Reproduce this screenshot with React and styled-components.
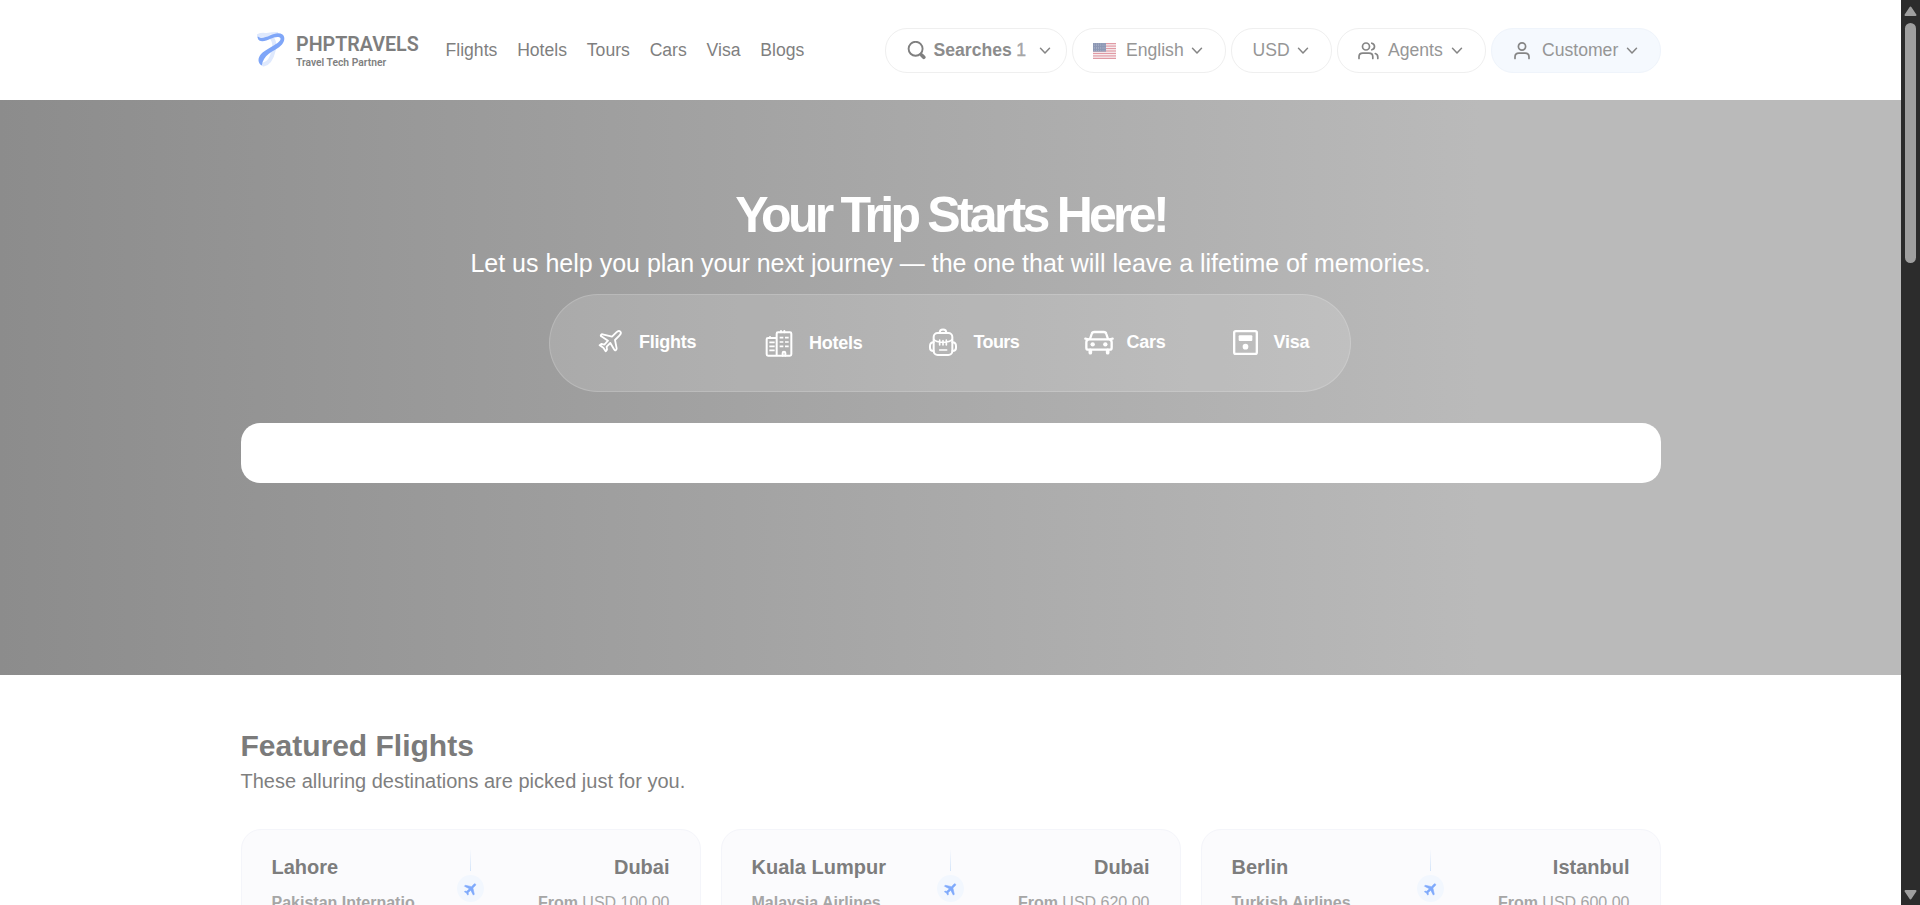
import React from "react";
import styled, { createGlobalStyle } from "styled-components";

const GlobalStyle = createGlobalStyle`
  *, *::before, *::after { box-sizing: border-box; }
  html, body, #root { height: 100%; }
  body {
    margin: 0;
    overflow: hidden;
    background: #fff;
    color: #7f7f7f;
    font-family: "Liberation Sans", Arial, sans-serif;
  }
  svg { display: block; flex: none; }
`;

const Window = styled.div`
  display: flex;
  height: 905px;
  overflow: hidden;
`;

const Page = styled.div`
  flex: 1;
  min-width: 0;
  height: 100%;
  overflow: hidden;
`;

const Container = styled.div`
  width: 1420px;
  margin: 0 auto;
`;

const Header = styled.header`
  height: 100px;
  background: #fff;
`;

const HeaderRow = styled(Container)`
  display: flex;
  align-items: center;
  height: 100px;
  padding-left: 16.5px;
`;

const Brand = styled.a`
  display: flex;
  align-items: flex-start;
  gap: 10px;
  width: 188.5px;
  height: 36px;
  margin-top: -1px;
`;

const BrandText = styled.div`
  display: flex;
  flex-direction: column;
  padding-top: 4px;
  font-family: Roboto, sans-serif;
  white-space: nowrap;
`;

const BrandName = styled.span`
  font-size: 19.7px;
  font-weight: 600;
  line-height: 18px;
  color: #7e7e7e;
`;

const BrandTagline = styled.span`
  margin-top: 3px;
  font-size: 10.3px;
  font-weight: 600;
  line-height: 11px;
  color: #808080;
`;

const Nav = styled.nav`
  display: flex;
  gap: 19.8px;
  flex: 1;
`;

const NavLink = styled.a`
  font-size: 17.6px;
  line-height: 24px;
  color: #7f7f7f;
`;

const Actions = styled.div`
  display: flex;
  gap: 5px;
  padding-top: 1px;
`;

const Pill = styled.button`
  display: flex;
  align-items: center;
  width: ${(p) => p.$width}px;
  height: 45px;
  padding: 0 0 0 ${(p) => p.$start}px;
  border: 1px solid ${(p) => (p.$tinted ? "#eff4fb" : "#efefef")};
  border-radius: 22px;
  background: ${(p) => (p.$tinted ? "#f5f9fe" : "#fff")};
  font-family: inherit;
  font-size: 17.6px;
  line-height: 24px;
  color: #969696;
  white-space: nowrap;
`;

const PillLabel = styled.span`
  margin: 0 ${(p) => p.$after ?? 8}px 2px ${(p) => p.$before ?? 0}px;
  font-weight: ${(p) => (p.$bold ? 700 : 400)};
  color: ${(p) => (p.$bold ? "#8c8c8c" : "inherit")};
`;

const Count = styled.span`
  margin: 0 12.5px 2px 4.5px;
  color: #a6a6a6;
  -webkit-text-stroke: 0.4px #a6a6a6;
`;

const Hero = styled.section`
  height: 575px;
  padding-top: 87px;
  background: linear-gradient(90deg, #8c8c8c 0, #bababa 1480px);
`;

const HeroInner = styled(Container)`
  display: flex;
  flex-direction: column;
  align-items: center;
  color: #fff;
`;

const HeroTitle = styled.h1`
  margin: 0;
  font-size: 50px;
  line-height: 56px;
  font-weight: 700;
  letter-spacing: -3.75px;
`;

const HeroText = styled.p`
  margin: 5px 0 0;
  font-size: 25px;
  line-height: 30px;
`;

const Tabs = styled.div`
  display: flex;
  align-items: center;
  width: 802px;
  height: 98px;
  margin: 16px 1px 0 0;
  padding: 0 0 2px 47px;
  border: 1px solid rgba(255, 255, 255, 0.16);
  border-radius: 49px;
  background: rgba(255, 255, 255, 0.14);
`;

const Tab = styled.a`
  display: flex;
  align-items: center;
  gap: ${(p) => p.$gap}px;
  width: ${(p) => p.$width}px;
  padding-top: ${(p) => p.$drop ?? 0}px;
  font-size: 18px;
  line-height: 24px;
  font-weight: 700;
  letter-spacing: ${(p) => p.$tracking ?? -0.25}px;
`;

const TabLabel = styled.span`
  margin-bottom: 1px;
`;

const SearchPanel = styled.div`
  width: 1420px;
  height: 60px;
  margin-top: 31px;
  border-radius: 19px;
  background: #fff;
`;

const Section = styled(Container).attrs({ as: "section" })`
  padding-top: 53px;
`;

const SectionTitle = styled.h2`
  margin: 0;
  font-size: 30px;
  line-height: 36px;
  font-weight: 700;
  color: #7b7b7b;
`;

const SectionText = styled.p`
  margin: 5px 0 0;
  font-size: 20px;
  line-height: 24px;
  color: #7f7f7f;
`;

const Cards = styled.div`
  display: grid;
  grid-template-columns: repeat(3, 460px);
  gap: 20px;
  margin-top: 36px;
`;

const Card = styled.article`
  display: grid;
  grid-template-columns: 1fr 28px 1fr;
  height: 120px;
  padding: 19px 30px 0;
  border: 1px solid #f4f5fa;
  border-radius: 20px;
  background: #fbfbfd;
`;

const Place = styled.div`
  padding-top: 6px;
  text-align: ${(p) => (p.$end ? "right" : "left")};
  white-space: nowrap;
`;

const City = styled.h3`
  margin: 0;
  font-size: 20px;
  line-height: 25px;
  color: #7d7d7d;
`;

const Detail = styled.p`
  margin: 12px 0 0;
  font-size: 16px;
  line-height: 22px;
  font-weight: ${(p) => (p.$strong ? 700 : 400)};
  color: #a6a6a6;
`;

const Route = styled.div`
  display: flex;
  flex-direction: column;
  align-items: center;
  gap: 4px;
`;

const RouteLine = styled.span`
  width: 1px;
  height: 22px;
  background: linear-gradient(#fbfbfd, #d3e4f9);
`;

const RouteBadge = styled.span`
  display: grid;
  place-items: center;
  width: 27px;
  height: 27px;
  border-radius: 50%;
  background: #f2f7fe;
`;

const Scrollbar = styled.aside`
  display: flex;
  flex-direction: column;
  align-items: center;
  width: 19px;
  height: 100%;
  padding: 6px 0 5px;
  background: #2c2c2c;
`;

const ScrollThumb = styled.div`
  width: 11px;
  height: 240px;
  margin: 7px 0 auto;
  border-radius: 6px;
  background: #9f9f9f;
`;

const Logo = () => (
  <svg width="29" height="36" viewBox="0 0 29 36" fill="none">
    <path d="M1 4C5 2 10 3 13 4.500 17.500 7.500 18 13 16.500 19 15 25.500 12 31.500 6.500 32.500" stroke="#dfe9fd" strokeWidth="4" strokeLinecap="round" />
    <path d="M2 4.500C8 1 14 1 21 1" stroke="#dfe9fd" strokeWidth="2" />
    <path d="M.8 4.500C4 7 8.500 5.500 13 3.500 17 1.700 22 .300 25.500 2.500 28.500 5 27.500 9.500 25 12.500 21.500 16.500 16 18.500 11.500 22 8 25 5.500 28.500 4.800 33.500 1.300 31.500.500 27.500 2.800 23.700 6 19 12 16.500 17.500 13 21.500 10.500 24.500 8 23.300 6 22 4 17 5 13.500 6.800 9.500 8.800 5 10.300 2.300 8.500 1 7.600.500 6 .8 4.500Z" fill="#7fa6f8" />
  </svg>
);

const Chevron = () => (
  <svg width="12" height="8" viewBox="0 0 12 8" fill="none" stroke="#858585" strokeWidth="1.500" strokeLinecap="round" strokeLinejoin="round">
    <path d="M1.500 1.200 6 5.900l4.500-4.700" />
  </svg>
);

const SearchIcon = () => (
  <svg width="19" height="19" viewBox="0 0 19 19" fill="none" stroke="#7f7f7f" strokeLinecap="round">
    <circle cx="8.600" cy="7.800" r="7" strokeWidth="1.900" />
    <path d="m13.600 13 .9.900" strokeWidth="2.200" />
    <path d="m14.800 14.200 2 2.100" strokeWidth="3.600" />
  </svg>
);

const stripes = [0, 2, 4, 6, 8, 10, 12];
const starRows = [1, 2.6, 4.2, 5.8, 7.4];
const starCols = [1.2, 3.4, 5.6, 7.8, 10, 12];

const Flag = () => (
  <svg width="23" height="16" viewBox="0 0 23 16">
    <rect width="23" height="16" fill="#f8f3f5" />
    {stripes.map((n) => (
      <rect key={n} y={n * 1.231} width="23" height="1.231" fill="#e19aa4" />
    ))}
    <rect width="13" height="8.620" fill="#8c97b4" />
    {starRows.map((y) =>
      starCols.map((x) => <circle key={`${x}-${y}`} cx={x} cy={y} r="0.450" fill="#c3c9d8" />)
    )}
  </svg>
);

const AgentsIcon = () => (
  <svg width="21" height="18" viewBox="0 0 21 18" fill="none" stroke="#858585" strokeWidth="1.700" strokeLinecap="round">
    <circle cx="8" cy="4.500" r="3.500" />
    <path d="M1 16.500v-1.700c0-2.200 1.600-3.600 3.800-3.600h6.200c2.200 0 3.800 1.400 3.800 3.600v1.700" />
    <path d="M13.800 1.200c3.600 1 3.600 5.600 0 6.600" />
    <path d="M17.300 11.500c1.600.5 2.500 1.700 2.500 3.400v1.600" />
  </svg>
);

const UserIcon = () => (
  <svg width="16" height="18" viewBox="0 0 16 18" fill="none" stroke="#858585" strokeWidth="1.700" strokeLinecap="round">
    <circle cx="8" cy="4.500" r="3.600" />
    <path d="M1 16.500v-1.500c0-2.300 1.600-3.800 3.900-3.800h6.200c2.300 0 3.900 1.500 3.900 3.800v1.500" />
  </svg>
);

const FlightsIcon = () => (
  <svg width="26" height="26" viewBox="0 0 78 78" fill="none" stroke="#fff" strokeWidth="5.500" strokeLinecap="round" strokeLinejoin="round">
    <path d="M70 8c-3-3-8-2-12 2L45 23 17 16c-2-.5-4 .5-5 2s-1 3 1 4l20 13-11 12-9-2-5 4 11 7 7 11 4-5-1-9 11-11 12 20c1 2 3 3 5 1 2-1 2-3 2-5L54 33l13-13c4-4 6-9 3-12Z" />
  </svg>
);

const HotelsIcon = () => (
  <svg width="28" height="28" viewBox="0 0 84 84" fill="none" stroke="#fff" strokeWidth="6" strokeLinecap="round" strokeLinejoin="round">
    <path d="M35 27H9a4 4 0 0 0-4 4v45a4 4 0 0 0 4 4h66a4 4 0 0 0 4-4V14a4 4 0 0 0-4-4H39a4 4 0 0 0-4 4v66" />
    <path d="M15 27v-3M48 10V6M58 10V6M53 80v-8a4 4 0 0 1 8 0v8" />
    <path strokeWidth="5" strokeLinecap="butt" d="M13 40h16M13 52h16M13 64h16M44 26h11M60 26h11M44 39h11M60 39h11M44 52h11M60 52h11" />
  </svg>
);

const ToursIcon = () => (
  <svg width="28" height="28" viewBox="0 0 84 84" fill="none" stroke="#fff" strokeWidth="6" strokeLinecap="round" strokeLinejoin="round">
    <path d="M32 14c0-13 20-13 20 0" />
    <rect x="14" y="15" width="56" height="66" rx="12" />
    <path strokeWidth="5" d="M14 34c9 12 47 12 56 0M32 36v15M42 38v13M52 36v15M32 66h21" />
    <path d="M14 43c-7 0-11 4-11 11v6c0 6 4 9 11 9M70 43c7 0 11 4 11 11v6c0 6-4 9-11 9" />
  </svg>
);

const CarsIcon = () => (
  <svg width="30" height="26" viewBox="0 0 90 78" fill="none" stroke="#fff" strokeWidth="7" strokeLinecap="round" strokeLinejoin="round">
    <path d="m18 30 5-15c1-4 4-6 8-6h28c4 0 7 2 8 6l5 15" />
    <path d="M16 31h58c5 0 9 4 9 9v16c0 4-2 6-6 6H13c-4 0-6-2-6-6V40c0-5 4-9 9-9ZM4 29l9 2M86 29l-9 2" />
    <path strokeWidth="11" d="M19 64v7M71 64v7" />
    <circle cx="26" cy="46" r="6.500" fill="#fff" stroke="none" />
    <circle cx="64" cy="46" r="6.500" fill="#fff" stroke="none" />
  </svg>
);

const VisaIcon = () => (
  <svg width="25" height="25" viewBox="0 0 75 75" fill="none">
    <rect x="3.500" y="3.500" width="68" height="68" rx="5" stroke="#fff" strokeWidth="7" />
    <rect x="17" y="16" width="41" height="17" rx="3" fill="#fff" />
    <circle cx="37.500" cy="50" r="8.500" fill="#fff" />
  </svg>
);

const PlaneIcon = () => (
  <svg width="16" height="16" viewBox="0 0 24 24" fill="#7faafc" stroke="#7faafc" strokeWidth="0.800">
    <path transform="rotate(45 12 12)" d="M21 16v-2l-8-5V3.500c0-.83-.67-1.500-1.500-1.500S10 2.670 10 3.500V9l-8 5v2l8-2.500V19l-2 1.500V22l3.500-1 3.500 1v-1.500L13 19v-5.500l8 2.500z" />
  </svg>
);

const ScrollArrow = ({ down }) => (
  <svg width="13" height="10" viewBox="0 0 13 10" fill="#9f9f9f" stroke="#9f9f9f" strokeWidth="2" strokeLinejoin="round">
    <path d={down ? "M1.500 1h10L6.500 8.500Z" : "M1.500 9h10L6.500 1.500Z"} />
  </svg>
);

const links = ["Flights", "Hotels", "Tours", "Cars", "Visa", "Blogs"];

const tabs = [
  { label: "Flights", icon: FlightsIcon, width: 168, gap: 16 },
  { label: "Hotels", icon: HotelsIcon, width: 164, gap: 16, drop: 2 },
  { label: "Tours", icon: ToursIcon, width: 154.5, gap: 16.5, tracking: -0.6 },
  { label: "Cars", icon: CarsIcon, width: 149.5, gap: 13 },
  { label: "Visa", icon: VisaIcon, width: 80, gap: 15.5 },
];

const flights = [
  { from: "Lahore", to: "Dubai", airline: "Pakistan Internatio", price: "USD 100.00" },
  { from: "Kuala Lumpur", to: "Dubai", airline: "Malaysia Airlines", price: "USD 620.00" },
  { from: "Berlin", to: "Istanbul", airline: "Turkish Airlines", price: "USD 600.00" },
];

export default function App() {
  return (
    <Window>
      <GlobalStyle />
      <Page>
        <Header>
          <HeaderRow>
            <Brand>
              <Logo />
              <BrandText>
                <BrandName>PHPTRAVELS</BrandName>
                <BrandTagline>Travel Tech Partner</BrandTagline>
              </BrandText>
            </Brand>
            <Nav>
              {links.map((link) => (
                <NavLink key={link}>{link}</NavLink>
              ))}
            </Nav>
            <Actions>
              <Pill $width={182} $start={21.5}>
                <SearchIcon />
                <PillLabel $bold $before={7.5} $after={0}>Searches</PillLabel>
                <Count>1</Count>
                <Chevron />
              </Pill>
              <Pill $width={154} $start={20}>
                <Flag />
                <PillLabel $before={10.5} $after={7}>English</PillLabel>
                <Chevron />
              </Pill>
              <Pill $width={101} $start={21}>
                <PillLabel $after={7.5}>USD</PillLabel>
                <Chevron />
              </Pill>
              <Pill $width={149} $start={20}>
                <AgentsIcon />
                <PillLabel $before={9.5} $after={8}>Agents</PillLabel>
                <Chevron />
              </Pill>
              <Pill $width={170} $start={22.5} $tinted>
                <UserIcon />
                <PillLabel $before={12} $after={7.5}>Customer</PillLabel>
                <Chevron />
              </Pill>
            </Actions>
          </HeaderRow>
        </Header>

        <Hero>
          <HeroInner>
            <HeroTitle>Your Trip Starts Here!</HeroTitle>
            <HeroText>
              Let us help you plan your next journey — the one that will leave a lifetime of memories.
            </HeroText>
            <Tabs>
              {tabs.map(({ label, icon: Icon, width, gap, drop, tracking }) => (
                <Tab key={label} $width={width} $gap={gap} $drop={drop} $tracking={tracking}>
                  <Icon />
                  <TabLabel>{label}</TabLabel>
                </Tab>
              ))}
            </Tabs>
            <SearchPanel />
          </HeroInner>
        </Hero>

        <Section>
          <SectionTitle>Featured Flights</SectionTitle>
          <SectionText>These alluring destinations are picked just for you.</SectionText>
          <Cards>
            {flights.map((f) => (
              <Card key={f.from}>
                <Place>
                  <City>{f.from}</City>
                  <Detail $strong>{f.airline}</Detail>
                </Place>
                <Route>
                  <RouteLine />
                  <RouteBadge>
                    <PlaneIcon />
                  </RouteBadge>
                </Route>
                <Place $end>
                  <City>{f.to}</City>
                  <Detail>
                    <b>From</b> {f.price}
                  </Detail>
                </Place>
              </Card>
            ))}
          </Cards>
        </Section>
      </Page>
      <Scrollbar>
        <ScrollArrow />
        <ScrollThumb />
        <ScrollArrow down />
      </Scrollbar>
    </Window>
  );
}
